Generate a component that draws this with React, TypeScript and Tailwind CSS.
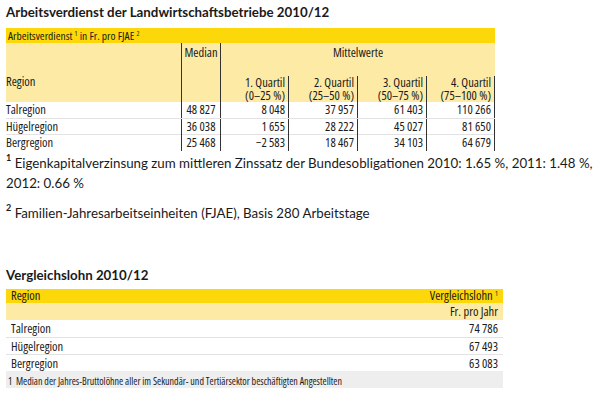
const narrow = "font-['Open_Sans',sans-serif] font-stretch-[75%]";

const rows = [
  { region: "Talregion", median: "48 827", q: ["8 048", "37 957", "61 403", "110 266"] },
  { region: "Hügelregion", median: "36 038", q: ["1 655", "28 222", "45 027", "81 650"] },
  { region: "Bergregion", median: "25 468", q: ["−2 583", "18 467", "34 103", "64 679"] },
];

const quartile = [
  ["1. Quartil", "(0–25 %)"],
  ["2. Quartil", "(25–50 %)"],
  ["3. Quartil", "(50–75 %)"],
  ["4. Quartil", "(75–100 %)"],
];

const lohn = [
  ["Talregion", "74 786"],
  ["Hügelregion", "67 493"],
  ["Bergregion", "63 083"],
];

function Sup({ children }: { children: React.ReactNode }) {
  return <span className="text-[7px] leading-none relative -top-[4px]">{children}</span>;
}

export default function App() {
  return (
    <div className="w-[606px] h-[402px] bg-white text-[#1a1a1a] overflow-hidden">
      {/* Titel */}
      <h1 className="pt-1 pl-[6px] text-[13.3px] leading-[16px] font-bold font-['Lato',sans-serif]">
        Arbeitsverdienst der Landwirtschaftsbetriebe 2010/12
      </h1>

      {/* Tabelle Arbeitsverdienst */}
      <div className={`mt-2 ml-[6px] w-[489px] text-[12.5px] ${narrow}`}>
        <div className="h-[15px] bg-[#fcd80a] pl-[2px] leading-[15px] text-[11.5px]">
          Arbeitsverdienst <Sup>1</Sup> in Fr. pro FJAE <Sup>2</Sup>
        </div>
        <div className="grid grid-cols-[175px_40px_68px_69px_69px_68px] grid-rows-[33px_26px] bg-[#fdeaa5] leading-[13px]">
          <div className="row-span-2 flex items-end pb-[14px]">Region</div>
          <div className="row-span-2 border-x border-[#333] text-center pt-[3px]">Median</div>
          <div className="col-span-4 text-center pt-[3px]">Mittelwerte</div>
          {quartile.map(([a, b]) => (
            <div key={a} className="border-r border-[#333] text-right pr-[3px]">
              <div>{a}</div>
              <div>{b}</div>
            </div>
          ))}
        </div>
        {rows.map((r, i) => (
          <div
            key={r.region}
            className={`grid grid-cols-[175px_40px_68px_69px_69px_68px] h-[16px] leading-[16px] ${
              i > 0 ? "border-t border-[#e2e2e2]" : ""
            }`}
          >
            <div>{r.region}</div>
            <div className="border-x border-[#333] text-center">{r.median}</div>
            {r.q.map((v, j) => (
              <div key={j} className="border-r border-[#333] text-right pr-[3px]">
                {v}
              </div>
            ))}
          </div>
        ))}
      </div>

      {/* Fussnoten */}
      <div className="mt-[3px] pl-[6px] text-[13.3px] leading-[20px] font-['Lato',sans-serif]">
        <p>
          <span className="font-bold text-[9px] leading-[10px] align-top">1</span> Eigenkapitalverzinsung
          zum mittleren Zinssatz der Bundesobligationen 2010: 1.65 %, 2011: 1.48 %, 2012: 0.66 %
        </p>
        <p className="mt-[10px]">
          <span className="font-bold text-[9px] leading-[10px] align-top">2</span>{" "}
          Familien-Jahresarbeitseinheiten (FJAE), Basis 280 Arbeitstage
        </p>
      </div>

      {/* Vergleichslohn */}
      <h2 className="mt-[43px] pl-[6px] text-[13.3px] leading-[18px] font-bold font-['Lato',sans-serif]">
        Vergleichslohn 2010/12
      </h2>
      <div className={`mt-[5px] ml-[6px] w-[497px] text-[12.5px] ${narrow}`}>
        <div className="flex justify-between h-[14px] leading-[14px] bg-[#fcd80a] px-[5px]">
          <span>Region</span>
          <span>
            Vergleichslohn <Sup>1</Sup>
          </span>
        </div>
        <div className="h-[17px] leading-[17px] bg-[#fdeaa5] text-right pr-[5px]">Fr. pro Jahr</div>
        {lohn.map(([r, v], i) => (
          <div
            key={r}
            className={`flex justify-between h-[17px] leading-[17px] px-[5px] ${
              i > 0 ? "border-t border-[#e2e2e2]" : ""
            }`}
          >
            <span>{r}</span>
            <span>{v}</span>
          </div>
        ))}
        <div className="h-[17px] bg-[#eeeeee] pl-[2px] text-[10px] leading-[20px] overflow-hidden whitespace-nowrap">
          1&nbsp;&nbsp;Median der Jahres-Bruttolöhne aller im Sekundär- und Tertiärsektor beschäftigten Angestellten
        </div>
      </div>
    </div>
  );
}
